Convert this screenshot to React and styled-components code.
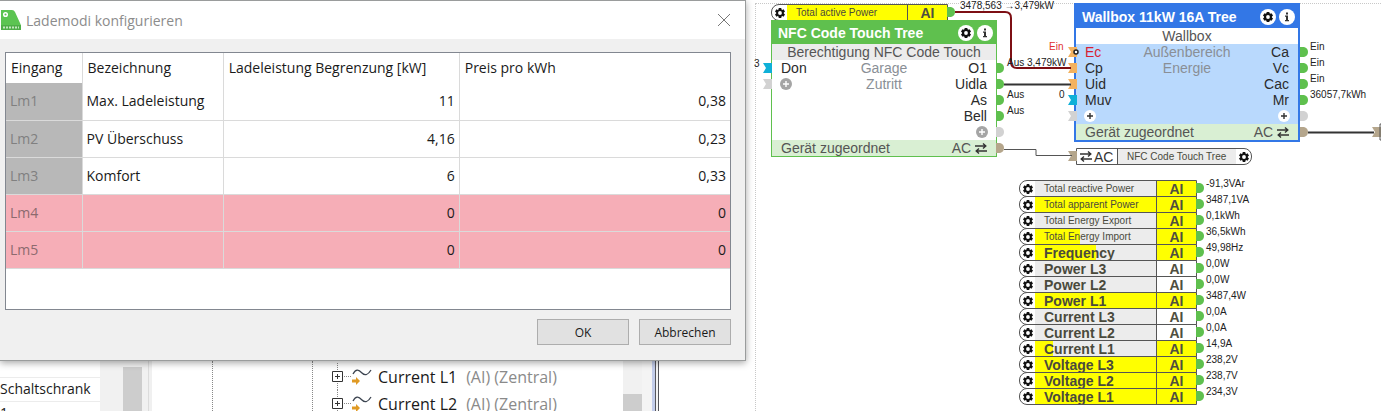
import React from 'react';
import styled, { createGlobalStyle } from 'styled-components';

const GlobalStyle = createGlobalStyle`
    * {
        box-sizing: border-box;
    }
    body {
        margin: 0;
        background: #ffffff;
        color: #1a1a1a;
        font-family: 'Open Sans', 'Noto Sans', sans-serif;
        font-size: 14px;
    }
    button {
        font: inherit;
        color: inherit;
        cursor: pointer;
    }
`;

const Screen = styled.div`
    display: grid;
    grid-template-columns: minmax(0, 750fr) minmax(0, 631fr);
    height: 100vh;
    overflow: hidden;
`;

const LeftColumn = styled.div`
    display: flex;
    flex-direction: column;
    min-height: 0;
`;

/* ---------- Dialog ---------- */

const Dialog = styled.section`
    position: relative;
    z-index: 1;
    flex: none;
    margin-right: 4px;
    background: #f0f0f0;
    border: 1px solid #9a9c9c;
    border-left: 0;
    box-shadow: 0 2px 7px rgba(0, 0, 0, 0.35);
`;

const TitleBar = styled.header`
    display: flex;
    align-items: center;
    gap: 5px;
    height: 38px;
    padding: 0 10px 0 1px;
    background: #ffffff;
`;

const Title = styled.h1`
    flex: 1;
    margin: 0;
    font-size: 14px;
    font-weight: 400;
    color: #8c8c8c;
`;

const CloseButton = styled.button`
    display: flex;
    padding: 4px;
    border: 0;
    background: none;
`;

const TableFrame = styled.div`
    height: 258px;
    margin: 13px 14px 0 5px;
    background: #ffffff;
    border: 1px solid #828790;
`;

const Table = styled.table`
    width: 100%;
    table-layout: fixed;
    border-collapse: collapse;
    line-height: 20px;

    th,
    td {
        border-right: 1px solid #dadada;
        text-align: left;
    }
    th {
        height: 30px;
        padding: 0 6px 0 5px;
        font-weight: 400;
        white-space: nowrap;
    }
    td {
        height: 37px;
        padding: 0 4px;
        border-bottom: 1px solid #dadada;
    }
    th:last-child,
    td:last-child {
        border-right: 0;
    }
`;

const Col = styled.col`
    width: ${(props) => props.$width};
`;

const Row = styled.tr`
    background: ${(props) => (props.$unused ? '#f6aeb7' : '#ffffff')};

    td:first-child {
        color: ${(props) => (props.$unused ? '#8c6a6e' : '#808080')};
        background: ${(props) => (props.$unused ? '#f6aeb7' : '#b8b8b8')};
    }
    td:nth-child(n + 3) {
        text-align: right;
    }
`;

const Actions = styled.footer`
    display: flex;
    justify-content: flex-end;
    gap: 10px;
    padding: 9px 14px 15px;
`;

const ActionButton = styled.button`
    width: 92px;
    height: 26px;
    padding: 0;
    background: #e1e1e1;
    border: 1px solid #adadad;
    && {
        font-size: 12px;
    }
`;

/* ---------- Docked panes under the dialog ---------- */

const Dock = styled.div`
    display: flex;
    flex: 1;
    min-height: 0;
    overflow: hidden;
`;

const PropertyList = styled.ul`
    width: 100px;
    margin: 0;
    padding: 16px 0 0;
    list-style: none;
    line-height: 22px;
    white-space: nowrap;

    li {
        height: 24px;
        border-top: 1px solid #ececec;
    }
`;

const Scrollbar = styled.div`
    width: ${(props) => props.$width}px;
    padding: ${(props) => props.$top}px 0 0 ${(props) => props.$inset}px;
    background: #f1f1f1;

    &::before {
        content: '';
        display: block;
        width: 19px;
        height: 100%;
        background: #cdcdcd;
    }
`;

const Divider = styled.div`
    width: 4px;
    background: #f0f0f0;
    border-left: 1px solid #dcdcdc;
`;

const Tree = styled.div`
    display: flex;
    flex: 1;
    min-width: 0;
`;

const Guide = styled.div`
    width: ${(props) => props.$width}px;
    border-right: 1px dotted #888888;
`;

const TreeItems = styled.ul`
    flex: 1;
    margin: 0;
    padding: 2px 0 0 19px;
    list-style: none;
    font-size: 16px;
    line-height: 20px;
    white-space: nowrap;

    li {
        display: flex;
        align-items: center;
        height: 27px;
    }
    span {
        margin-left: 9px;
        color: #8a8a8a;
    }
`;

const TreeIcon = styled.svg`
    flex: none;
    margin-right: 5px;
`;

const PaneEdge = styled.div`
    width: 17px;
    background: #f4f4f4;
    border-right: 4px double #55565c;
    box-shadow: inset -3px 0 0 #c3cdea;
`;

const CanvasMargin = styled.div`
    width: 91px;
    background: #ffffff;
`;

/* ---------- Diagram ---------- */

const Canvas = styled.main`
    position: relative;
    overflow: hidden;
    background: #ffffff;
    font-family: 'Liberation Sans', Arial, sans-serif;
`;

const Sheet = styled.div`
    position: absolute;
    inset: 3px 0 0 5px;
    border-top: 1px dotted #c8c8c8;
    border-left: 1px dotted #c8c8c8;
`;

const Wires = styled.svg`
    position: absolute;
    top: 0;
    left: 0;
    pointer-events: none;
`;

const Placed = styled.div`
    position: absolute;
    left: ${(props) => props.$x}px;
    top: ${(props) => props.$y}px;
`;

const Value = styled(Placed)`
    font-size: 10px;
    line-height: 12px;
    white-space: nowrap;
    color: ${(props) => props.$color || '#222222'};
`;

const Block = styled(Placed)`
    width: 226px;
    font-size: 14px;
    line-height: 16px;
    border: ${(props) => `${props.$edge}px solid ${props.$color}`};
    background: ${(props) => props.$fill};
`;

const BlockTitle = styled.h2`
    display: flex;
    align-items: center;
    gap: 3px;
    height: 23px;
    margin: 0;
    padding: 0 3px 0 6px;
    font-size: 14px;
    font-weight: 700;
    color: #ffffff;
    background: ${(props) => props.$color};

    span {
        flex: 1;
        white-space: nowrap;
    }
`;

const BlockName = styled.div`
    height: 16px;
    text-align: center;
    white-space: nowrap;
    color: #555555;
    background: ${(props) => props.$color};
`;

const Ports = styled.div`
    display: grid;
    grid-template-columns: 1fr 1fr 1fr;
    height: 80px;
    padding: 0 9px;

    div {
        display: flex;
        flex-direction: column;
        white-space: nowrap;
    }
    div:nth-child(2) {
        align-items: center;
        color: #8a8f96;
    }
    div:nth-child(3) {
        align-items: flex-end;
    }
    svg {
        margin: 2px -1px;
    }
`;

const PortName = styled.span`
    color: ${(props) => props.$color || '#2b2b2b'};
`;

const BlockFooter = styled.div`
    display: flex;
    justify-content: space-between;
    height: 16px;
    padding: 0 9px;
    color: #555555;
    background: #d9efd3;

    svg {
        vertical-align: -1px;
    }
`;

const IconButton = styled.button`
    display: flex;
    flex: none;
    padding: 0;
    border: 0;
    background: none;
`;

const Tag = styled(Placed)`
    display: flex;
    width: ${(props) => props.$width}px;
    height: 17px;
    overflow: hidden;
    border: 1px solid #555555;
    border-radius: ${(props) => (props.$flip ? '0 8px 8px 0' : '8px 0 0 8px')};
    background: #ffffff;
`;

const TagGear = styled(IconButton)`
    align-items: center;
    justify-content: center;
    width: 15px;
`;

/* The label fills up with yellow as the signal rises */
const TagLabel = styled.div`
    flex: 1;
    padding-left: 9px;
    font-size: ${(props) => (props.$big ? 14 : 10)}px;
    font-weight: ${(props) => (props.$big ? 700 : 400)};
    line-height: 16px;
    white-space: nowrap;
    color: #4a4a3c;
    background: ${(props) =>
        `linear-gradient(90deg, #ffff00 ${props.$level}%, #ececec ${props.$level}%)`};
`;

const TagType = styled.div`
    width: 40px;
    border-left: 1px solid #555555;
    text-align: center;
    font-size: 14px;
    font-weight: 700;
    line-height: 16px;
    color: #4f4f40;
    background: ${(props) => (props.$on ? '#ffff00' : '#ffffff')};
`;

const LinkType = styled.div`
    display: flex;
    align-items: center;
    gap: 2px;
    width: 41px;
    padding-left: 3px;
    border-right: 1px solid #555555;
    font-size: 14px;
    color: #333333;
`;

const ROWS = [
    { id: 'Lm1', name: 'Max. Ladeleistung', limit: '11', price: '0,38' },
    { id: 'Lm2', name: 'PV Überschuss', limit: '4,16', price: '0,23' },
    { id: 'Lm3', name: 'Komfort', limit: '6', price: '0,33' },
    { id: 'Lm4', name: '', limit: '0', price: '0', unused: true },
    { id: 'Lm5', name: '', limit: '0', price: '0', unused: true },
];

const SIGNALS = [
    { name: 'Total reactive Power', value: '-91,3VAr', level: 0, on: true },
    { name: 'Total apparent Power', value: '3487,1VA', level: 100, on: true },
    { name: 'Total Energy Export', value: '0,1kWh', level: 0, on: true },
    { name: 'Total Energy Import', value: '36,5kWh', level: 37, on: true },
    { name: 'Frequency', value: '49,98Hz', level: 50, on: true, big: true },
    { name: 'Power L3', value: '0,0W', level: 0, big: true },
    { name: 'Power L2', value: '0,0W', level: 0, big: true },
    { name: 'Power L1', value: '3487,4W', level: 100, on: true, big: true },
    { name: 'Current L3', value: '0,0A', level: 0, big: true },
    { name: 'Current L2', value: '0,0A', level: 0, big: true },
    { name: 'Current L1', value: '14,9A', level: 15, on: true, big: true },
    { name: 'Voltage L3', value: '238,2V', level: 100, on: true, big: true },
    { name: 'Voltage L2', value: '238,7V', level: 100, on: true, big: true },
    { name: 'Voltage L1', value: '234,3V', level: 100, on: true, big: true },
];

const signalY = (index) => 180 + index * 16;

const VALUES = [
    { x: 210, y: 0, text: '3478,563 →3,479kW' },
    { x: 4, y: 58, text: '3' },
    { x: 257, y: 57, text: 'Aus 3,479kW' },
    { x: 257, y: 89, text: 'Aus' },
    { x: 257, y: 105, text: 'Aus' },
    { x: 299, y: 41, text: 'Ein', color: '#e03030' },
    { x: 309, y: 89, text: '0' },
    { x: 560, y: 41, text: 'Ein' },
    { x: 560, y: 57, text: 'Ein' },
    { x: 560, y: 73, text: 'Ein' },
    { x: 560, y: 89, text: '36057,7kWh' },
];

const Gear = () => (
    <svg width="10" height="10" viewBox="-6 -6 12 12" aria-hidden="true">
        <g fill="#111111">
            {[0, 60, 120].map((angle) => (
                <rect key={angle} x="-1.6" y="-6" width="3.2" height="12" transform={`rotate(${angle})`} />
            ))}
            <circle r="4.6" />
        </g>
        <circle r="2.3" fill="#ffffff" />
    </svg>
);

const RoundGear = () => (
    <svg width="16" height="16" viewBox="-8 -8 16 16" aria-hidden="true">
        <circle r="8" fill="#ffffff" />
        <g fill="#111111">
            {[0, 60, 120].map((angle) => (
                <rect key={angle} x="-1.4" y="-5" width="2.8" height="10" transform={`rotate(${angle})`} />
            ))}
            <circle r="4" />
        </g>
        <circle r="1.9" fill="#ffffff" />
    </svg>
);

const RoundInfo = () => (
    <svg width="16" height="16" viewBox="-8 -8 16 16" aria-hidden="true">
        <circle r="8" fill="#ffffff" />
        <path d="M-1-4.5h2v2h-2zM-2-1.5h3v4.5h1v1.2h-4v-1.2h1v-3.3h-1z" fill="#333333" />
    </svg>
);

const Plus = ({ fill, stroke }) => (
    <svg width="12" height="12" viewBox="-6 -6 12 12" aria-hidden="true">
        <circle r="6" fill={fill} />
        <path d="M-3 0h6M0-3v6" stroke={stroke} strokeWidth="1.4" />
    </svg>
);

const Swap = () => (
    <svg width="12" height="11" viewBox="0 0 12 11" aria-hidden="true">
        <path d="M0 3h10M8 .5L10.8 3L8 5.5M12 8H2M4 5.5L1.2 8L4 10.5" fill="none" stroke="#333333" strokeWidth="1.4" />
    </svg>
);

const AppIcon = () => (
    <svg width="20" height="20" viewBox="0 0 20 20" aria-hidden="true">
        <path d="M0 0h11q2 0 3 2l5 11q1 2 1 3v4H0z" fill="#5cc452" />
        <path d="M0 15h20v5H0z" fill="#4fae48" />
        <circle cx="4.500" cy="4.500" r="1.800" fill="none" stroke="#ffffff" strokeWidth="1.500" />
        <path d="M2 17.500h16" stroke="#c4e8c0" strokeWidth="2" strokeDasharray="2 1" />
    </svg>
);

const ExpandIcon = () => (
    <TreeIcon width="41" height="27" viewBox="0 -3 41 27" aria-hidden="true">
        <path d="M5.500-3v27" stroke="#888888" strokeDasharray="1 1" />
        <path d="M.5 5.500h10v10h-10zM3 10.500h5M5.500 8v5" fill="#ffffff" stroke="#333333" />
        <path d="M12 10.500h7" stroke="#888888" strokeDasharray="1 1" />
        <path d="M21 8C24 2 27 4 30 7S36 9 39 4" fill="none" stroke="#3c4450" strokeWidth="1.300" />
        <path d="M20 13.500h4v-2.500l4 4l-4 4v-2.500h-4z" fill="#e09a24" />
    </TreeIcon>
);

const outPort = (x, y, fill = '#5fc04e') => (
    <path key={`out-${x}-${y}`} d={`M${x} ${y - 5}h4q4 1 4 5t-4 5h-4z`} fill={fill} />
);

const inPort = (x, y, fill) => (
    <path key={`in-${x}-${y}`} d={`M${x} ${y - 5}h9v10h-9l3-5z`} fill={fill} />
);

const Lademodi = () => (
    <Dialog role="dialog" aria-labelledby="dialog-title">
        <TitleBar>
            <AppIcon />
            <Title id="dialog-title">Lademodi konfigurieren</Title>
            <CloseButton aria-label="Schließen">
                <svg width="14" height="14" viewBox="0 0 14 14" aria-hidden="true">
                    <path d="M1 1l12 12M13 1L1 13" stroke="#777777" />
                </svg>
            </CloseButton>
        </TitleBar>
        <TableFrame>
            <Table>
                <colgroup>
                    <Col $width="10.5%" />
                    <Col $width="19.5%" />
                    <Col $width="32.6%" />
                    <Col $width="37.4%" />
                </colgroup>
                <thead>
                    <tr>
                        <th scope="col">Eingang</th>
                        <th scope="col">Bezeichnung</th>
                        <th scope="col">Ladeleistung Begrenzung [kW]</th>
                        <th scope="col">Preis pro kWh</th>
                    </tr>
                </thead>
                <tbody>
                    {ROWS.map((row) => (
                        <Row key={row.id} $unused={row.unused}>
                            <td>{row.id}</td>
                            <td>{row.name}</td>
                            <td>{row.limit}</td>
                            <td>{row.price}</td>
                        </Row>
                    ))}
                </tbody>
            </Table>
        </TableFrame>
        <Actions>
            <ActionButton>OK</ActionButton>
            <ActionButton>Abbrechen</ActionButton>
        </Actions>
    </Dialog>
);

const DockedPanes = () => (
    <Dock>
        <PropertyList>
            <li>Schaltschrank</li>
            <li>1</li>
        </PropertyList>
        <Scrollbar $width={48} $top={6} $inset={23} />
        <Divider />
        <Tree>
            <Guide $width={61} />
            <Guide $width={100} />
            <TreeItems>
                {['Current L1', 'Current L2'].map((name) => (
                    <li key={name}>
                        <ExpandIcon />
                        {name} <span>(AI) (Zentral)</span>
                    </li>
                ))}
            </TreeItems>
        </Tree>
        <Scrollbar $width={19} $top={33} $inset={0} />
        <PaneEdge />
        <CanvasMargin />
    </Dock>
);

const Signal = ({ signal, index }) => (
    <>
        <Tag $x={269} $y={signalY(index)} $width={178}>
            <TagGear aria-label={`${signal.name} konfigurieren`}>
                <Gear />
            </TagGear>
            <TagLabel $level={signal.level} $big={signal.big}>
                {signal.name}
            </TagLabel>
            <TagType $on={signal.on}>AI</TagType>
        </Tag>
        <Value $x={456} $y={signalY(index) - 2}>
            {signal.value}
        </Value>
    </>
);

const BlockHeader = ({ title, color }) => (
    <BlockTitle $color={color}>
        <span>{title}</span>
        <IconButton aria-label="Einstellungen">
            <RoundGear />
        </IconButton>
        <IconButton aria-label="Info">
            <RoundInfo />
        </IconButton>
    </BlockTitle>
);

const Diagram = () => (
    <Canvas>
        <Sheet />

        <Tag $x={21} $y={4} $width={177}>
            <TagGear aria-label="Total active Power konfigurieren">
                <Gear />
            </TagGear>
            <TagLabel $level={100}>Total active Power</TagLabel>
            <TagType $on>AI</TagType>
        </Tag>

        <Block $x={21} $y={20} $edge={1} $color="#5fc04e" $fill="#ffffff">
            <BlockHeader title="NFC Code Touch Tree" color="#5fc04e" />
            <BlockName $color="#ececec">Berechtigung NFC Code Touch</BlockName>
            <Ports>
                <div>
                    <PortName>Don</PortName>
                    <Plus fill="#a5a5a5" stroke="#ffffff" />
                </div>
                <div>
                    <span>Garage</span>
                    <span>Zutritt</span>
                </div>
                <div>
                    <PortName>O1</PortName>
                    <PortName>Uidla</PortName>
                    <PortName>As</PortName>
                    <PortName>Bell</PortName>
                    <Plus fill="#a5a5a5" stroke="#ffffff" />
                </div>
            </Ports>
            <BlockFooter>
                <span>Gerät zugeordnet</span>
                <span>
                    AC <Swap />
                </span>
            </BlockFooter>
        </Block>

        <Block $x={324} $y={3} $edge={2} $color="#3377e6" $fill="#b9d9fd">
            <BlockHeader title="Wallbox 11kW 16A Tree" color="#3377e6" />
            <BlockName $color="#ffffff">Wallbox</BlockName>
            <Ports>
                <div>
                    <PortName $color="#d81f32">Ec</PortName>
                    <PortName>Cp</PortName>
                    <PortName>Uid</PortName>
                    <PortName>Muv</PortName>
                    <Plus fill="#ffffff" stroke="#333333" />
                </div>
                <div>
                    <span>Außenbereich</span>
                    <span>Energie</span>
                </div>
                <div>
                    <PortName>Ca</PortName>
                    <PortName>Vc</PortName>
                    <PortName>Cac</PortName>
                    <PortName>Mr</PortName>
                    <Plus fill="#ffffff" stroke="#333333" />
                </div>
            </Ports>
            <BlockFooter>
                <span>Gerät zugeordnet</span>
                <span>
                    AC <Swap />
                </span>
            </BlockFooter>
        </Block>

        <Tag $x={326} $y={148} $width={176} $flip>
            <LinkType>
                <Swap />
                AC
            </LinkType>
            <TagLabel $level={0}>NFC Code Touch Tree</TagLabel>
            <TagGear aria-label="NFC Code Touch Tree konfigurieren">
                <Gear />
            </TagGear>
        </Tag>

        {SIGNALS.map((signal, index) => (
            <Signal key={signal.name} signal={signal} index={index} />
        ))}

        <Wires width="631" height="411" aria-hidden="true">
            {outPort(197, 12)}
            {[68, 84, 100, 116].map((y) => outPort(246, y))}
            {outPort(246, 132, '#d2d2d2')}
            {outPort(246, 148, '#b5a68c')}
            {inPort(13, 68, '#0fb0d8')}
            {inPort(13, 84, '#d2d2d2')}
            {[52, 68, 84].map((y) => inPort(318, y, '#f3b260'))}
            {inPort(318, 100, '#0fb0d8')}
            {inPort(318, 116, '#d2d2d2')}
            {inPort(318, 156, '#b5a68c')}
            <circle cx="326" cy="52" r="2" fill="#ffffff" stroke="#222222" strokeWidth="1.5" />
            {[52, 68, 84, 100].map((y) => outPort(550, y))}
            {outPort(550, 116, '#d2d2d2')}
            {outPort(550, 132, '#b5a68c')}
            {inPort(622, 132, '#b5a68c')}
            {SIGNALS.map((signal, index) => outPort(446, signalY(index) + 8))}
            <path d="M205 12h50q6 0 6 6v44q0 6 6 6h54" fill="none" stroke="#7d0f14" strokeWidth="2" />
            <path d="M254 84.500h67M558 132.500h66" stroke="#333333" strokeWidth="2" />
            <path d="M254 149.500h32v6h36" fill="none" stroke="#555555" />
            <path d="M631 124h-1v16h1" fill="none" stroke="#555555" />
        </Wires>

        {VALUES.map((value) => (
            <Value key={`${value.x}-${value.y}`} $x={value.x} $y={value.y} $color={value.color}>
                {value.text}
            </Value>
        ))}
    </Canvas>
);

const App = () => {
    return (
        <>
            <GlobalStyle />
            <Screen>
                <LeftColumn>
                    <Lademodi />
                    <DockedPanes />
                </LeftColumn>
                <Diagram />
            </Screen>
        </>
    );
};

export default App;
